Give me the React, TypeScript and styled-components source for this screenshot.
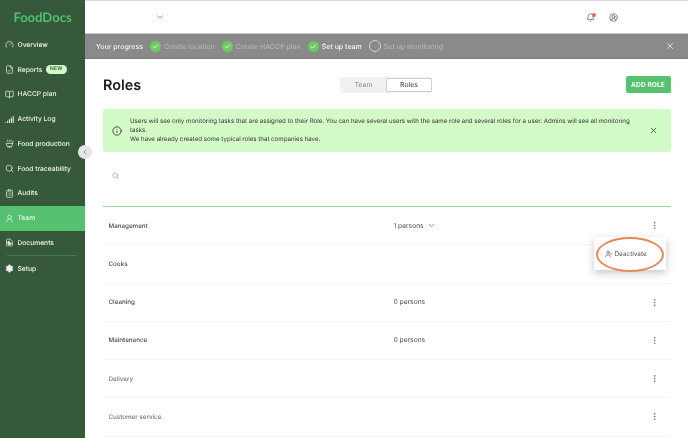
import { FC, ReactNode } from "react";
import styled, { createGlobalStyle } from "styled-components";
import {
  Bell,
  BookOpen,
  Check,
  ChevronDown,
  ChevronLeft,
  CircleUserRound,
  ClipboardList,
  FileCheck,
  Gauge,
  Info,
  MoreVertical,
  Search,
  Settings,
  Signal,
  Soup,
  UserCheck,
  UserRound,
  X,
} from "lucide-react";

const GlobalStyle = createGlobalStyle`
  html, body {
    margin: 0;
    padding: 0;
    width: 688px;
    height: 438px;
    overflow: hidden;
    background: #fff;
    font-family: Inter, "Liberation Sans", sans-serif;
    text-rendering: geometricPrecision;
  }
`;

const Shell = styled.div`
  display: flex;
  width: 688px;
  height: 438px;
  overflow: hidden;
  will-change: transform;
`;

const Sidebar = styled.aside`
  position: relative;
  flex: 0 0 85px;
  background: #35593a;
  color: #fff;
`;

const Logo = styled.div`
  display: flex;
  justify-content: center;
  height: 32.5px;
  padding: 8px 0 0 0;
  box-sizing: border-box;
  font-family: Lato, sans-serif;
  font-size: 13px;
  font-weight: 700;
  line-height: 18px;
  color: #4fc26c;
`;

const NavItem = styled.div<{ $active?: boolean }>`
  display: flex;
  align-items: center;
  gap: 3.5px;
  height: 24.75px;
  padding-left: 5px;
  font-size: 6.7px;
  font-weight: 500;
  white-space: nowrap;
  color: #eef3ee;
  background: ${(p) => (p.$active ? "#56c271" : "transparent")};
`;

const NavIcon = styled.span`
  display: flex;
  justify-content: center;
  width: 9px;
  color: #dfe7df;
`;

const NewBadge = styled.span`
  padding: 0 4px;
  height: 9px;
  line-height: 9px;
  border-radius: 5px;
  font-size: 5px;
  font-weight: 600;
  letter-spacing: 0.3px;
  background: #d3fbc8;
  color: #35593a;
`;

const NavDivider = styled.div`
  height: 1px;
  margin: 0 8px 0 7px;
  background: #46794f;
`;

const CollapseButton = styled.div`
  position: absolute;
  top: 144.5px;
  left: 78px;
  display: flex;
  align-items: center;
  justify-content: center;
  width: 14px;
  height: 14px;
  border-radius: 50%;
  background: #e6e6e6;
  color: #777;
`;

const Main = styled.main`
  flex: 1;
  min-width: 0;
  display: flex;
  flex-direction: column;
`;

const TopBar = styled.header`
  display: flex;
  align-items: center;
  box-sizing: border-box;
  height: 33px;
  padding: 0 0 0 70px;
  border-top: 1px solid #dcdcdc;
  color: #777;
`;

const TopIcons = styled.div`
  display: flex;
  align-items: center;
  gap: 14px;
  margin-left: auto;
  margin-right: 70px;
  color: #666;
`;

const BellWrap = styled.span`
  position: relative;
  display: flex;
`;

const BellDot = styled.span`
  position: absolute;
  top: 0;
  right: -1px;
  width: 4px;
  height: 4px;
  border-radius: 50%;
  background: #f0645a;
`;

const ProgressBar = styled.div`
  display: flex;
  align-items: center;
  box-sizing: border-box;
  height: 26px;
  padding: 0 13px 0 11px;
  background: #8a8a8a;
  border-top: 1px solid #c8c8c8;
  border-bottom: 1px solid #7c7c7c;
  font-size: 7px;
  font-weight: 500;
  white-space: nowrap;
  color: #f4f4f4;
`;

const Step = styled.div<{ $current?: boolean }>`
  display: flex;
  align-items: center;
  gap: 3px;
  margin-left: 7px;
  color: ${(p) => (p.$current ? "#f8f8f8" : "#b6b6b6")};
`;

const StepDone = styled.span`
  display: flex;
  align-items: center;
  justify-content: center;
  width: 11px;
  height: 11px;
  border-radius: 50%;
  background: #6ccb5f;
  color: #fff;
`;

const StepOpen = styled.span`
  width: 10px;
  height: 10px;
  border-radius: 50%;
  border: 1px solid #d0d0d0;
`;

const ProgressClose = styled.span`
  display: flex;
  margin-left: auto;
  color: #ececec;
`;

const Content = styled.div`
  position: relative;
  padding: 0 17.5px 0 18px;
`;

const TitleRow = styled.div`
  display: flex;
  align-items: center;
  height: 50px;
  padding-top: 1px;
  box-sizing: border-box;
`;

const Title = styled.h1`
  flex: 0 0 237px;
  margin: 2px 0 0;
  font-size: 14.4px;
  font-weight: 600;
  color: #1c1c1c;
`;

const Tabs = styled.div`
  display: flex;
  align-items: center;
  padding: 1px 0 1px 1px;
  border-radius: 2px;
  background: #f1f1f1;
`;

const Tab = styled.div<{ $active?: boolean }>`
  width: ${(p) => (p.$active ? "46px" : "45px")};
  height: 14px;
  line-height: ${(p) => (p.$active ? "12px" : "14px")};
  box-sizing: border-box;
  text-align: center;
  font-size: 6.8px;
  font-weight: 500;
  color: ${(p) => (p.$active ? "#555" : "#999")};
  background: ${(p) => (p.$active ? "#fff" : "transparent")};
  border: ${(p) => (p.$active ? "1px solid #cfcfcf" : "none")};
  border-radius: 1px;
`;

const AddButton = styled.button`
  margin-left: auto;
  width: 45px;
  height: 17px;
  padding: 0;
  border: none;
  border-radius: 2px;
  background: #56c271;
  font-family: inherit;
  font-size: 6.6px;
  font-weight: 700;
  letter-spacing: 0.1px;
  color: #fff;
`;

const Notice = styled.div`
  display: flex;
  align-items: center;
  box-sizing: border-box;
  height: 43px;
  padding: 0 13px 0 9px;
  border-radius: 3px;
  background: #d3fbc8;
  color: #333;
`;

const NoticeText = styled.p`
  flex: 1;
  margin: 0 12px 0 8px;
  font-size: 6.15px;
  line-height: 9px;
  color: #333;
`;

const SearchRow = styled.div`
  display: flex;
  align-items: center;
  box-sizing: border-box;
  height: 55px;
  padding: 0 0 8px 9px;
  border-bottom: 1px solid #93d8a6;
  color: #888;
`;

const Row = styled.div`
  position: relative;
  display: flex;
  align-items: center;
  box-sizing: border-box;
  height: 38.25px;
  padding: 0 12px 0 5.5px;
  border-bottom: 1px solid #f5f5f5;
  font-size: 6.7px;
  font-weight: 400;
  color: #555;
`;

const RoleName = styled.span<{ $muted?: boolean }>`
  flex: 0 0 285px;
  font-size: 6.25px;
  font-weight: 500;
  color: ${(p) => (p.$muted ? "#777" : "#4c4c4c")};
`;

const Persons = styled.span`
  display: flex;
  align-items: center;
  gap: 3px;
  color: #4c4c4c;
`;

const RowMenu = styled.span`
  display: flex;
  margin-left: auto;
  color: #666;
`;

const Popup = styled.div`
  position: absolute;
  top: 30px;
  right: 5px;
  z-index: 2;
  display: flex;
  align-items: center;
  gap: 2px;
  width: 72px;
  height: 33px;
  box-sizing: border-box;
  padding-left: 11px;
  background: #fff;
  box-shadow: 0 3px 8px rgba(0, 0, 0, 0.22);
  font-size: 6.4px;
  color: #555;
`;

const Highlight = styled.span`
  position: absolute;
  top: -0.5px;
  left: 2.5px;
  width: 68px;
  height: 35px;
  box-sizing: border-box;
  border: 2px solid #e58a5c;
  border-radius: 50%;
`;

const DocumentIcon: FC = () => (
  <svg width="9" height="9" viewBox="0 0 24 24" fill="none" stroke="currentColor" strokeWidth="2">
    <path d="M14 3H6a2 2 0 0 0-2 2v14a2 2 0 0 0 2 2h12a2 2 0 0 0 2-2V9z" />
    <path d="M12 8a5 5 0 1 0 5 5h-5z" fill="currentColor" />
  </svg>
);

const navItems: { label: string; icon: ReactNode; badge?: boolean; active?: boolean }[] = [
  { label: "Overview", icon: <Gauge size={9} /> },
  { label: "Reports", icon: <FileCheck size={9} />, badge: true },
  { label: "HACCP plan", icon: <BookOpen size={9} /> },
  { label: "Activity Log", icon: <Signal size={9} strokeWidth={3} /> },
  { label: "Food production", icon: <Soup size={9} /> },
  { label: "Food traceability", icon: <Search size={9} /> },
  { label: "Audits", icon: <ClipboardList size={9} /> },
  { label: "Team", icon: <UserRound size={9} />, active: true },
  { label: "Documents", icon: <DocumentIcon /> },
];

const roles = [
  { name: "Management", persons: "1 persons", open: true },
  { name: "Cooks", popup: true },
  { name: "Cleaning", persons: "0 persons" },
  { name: "Maintenance", persons: "0 persons" },
  { name: "Delivery", muted: true },
  { name: "Customer service", muted: true },
];

const StepItem: FC<{ label: string; current?: boolean; open?: boolean }> = ({ label, current, open }) => (
  <Step $current={current}>
    {open ? (
      <StepOpen />
    ) : (
      <StepDone>
        <Check size={7} strokeWidth={3} />
      </StepDone>
    )}
    {label}
  </Step>
);

const App: FC = () => (
  <Shell>
    <GlobalStyle />
    <Sidebar>
      <Logo>FoodDocs</Logo>
      {navItems.map((item) => (
        <NavItem key={item.label} $active={item.active}>
          <NavIcon>{item.icon}</NavIcon>
          {item.label}
          {item.badge && <NewBadge>NEW</NewBadge>}
        </NavItem>
      ))}
      <NavDivider />
      <NavItem>
        <NavIcon>
          <Settings size={9} fill="#fff" />
        </NavIcon>
        Setup
      </NavItem>
      <CollapseButton>
        <ChevronLeft size={8} />
      </CollapseButton>
    </Sidebar>
    <Main>
      <TopBar>
        <ChevronDown size={10} />
        <TopIcons>
          <BellWrap>
            <Bell size={9} />
            <BellDot />
          </BellWrap>
          <CircleUserRound size={9} />
        </TopIcons>
      </TopBar>
      <ProgressBar>
        Your progress
        <StepItem label="Create location" />
        <StepItem label="Create HACCP plan" />
        <StepItem label="Set up team" current />
        <StepItem label="Set up monitoring" open />
        <ProgressClose>
          <X size={10} />
        </ProgressClose>
      </ProgressBar>
      <Content>
        <TitleRow>
          <Title>Roles</Title>
          <Tabs>
            <Tab>Team</Tab>
            <Tab $active>Roles</Tab>
          </Tabs>
          <AddButton>ADD ROLE</AddButton>
        </TitleRow>
        <Notice>
          <Info size={10} />
          <NoticeText>
            Users will see only monitoring tasks that are assigned to their Role. You can have several users with the
            same role and several roles for a user. Admins will see all monitoring tasks.
            <br />
            We have already created some typical roles that companies have.
          </NoticeText>
          <X size={9} />
        </Notice>
        <SearchRow>
          <Search size={7} />
        </SearchRow>
        {roles.map((role) => (
          <Row key={role.name}>
            <RoleName $muted={role.muted}>{role.name}</RoleName>
            {role.persons && (
              <Persons>
                {role.persons}
                {role.open && <ChevronDown size={9} color="#56c271" strokeWidth={2.5} />}
              </Persons>
            )}
            {!role.popup && (
              <RowMenu>
                <MoreVertical size={9} />
              </RowMenu>
            )}
            {role.open && (
              <Popup>
                <UserCheck size={8} />
                Deactivate
                <Highlight />
              </Popup>
            )}
          </Row>
        ))}
      </Content>
    </Main>
  </Shell>
);

export default App;
